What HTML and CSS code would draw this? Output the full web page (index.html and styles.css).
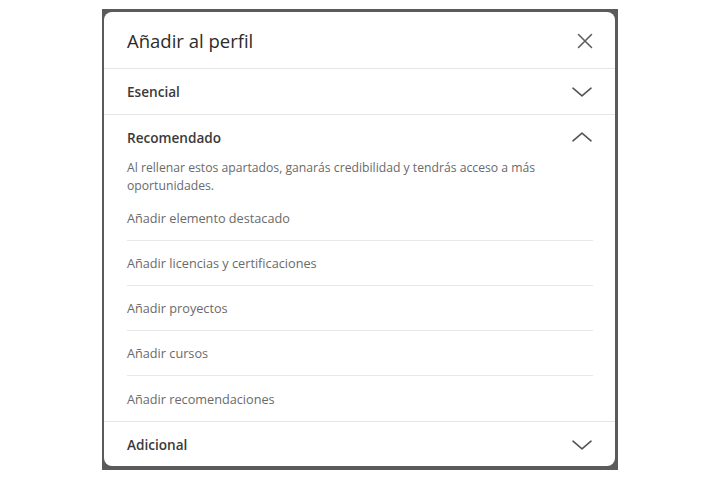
FILE: index.html
```
<!DOCTYPE html>
<html lang="es">
<head>
<meta charset="utf-8">
<title>Añadir al perfil</title>
<link rel="stylesheet" href="styles.css">
</head>
<body>
<div class="backdrop">
  <div class="modal">
    <div class="modal-head">
      <h2 class="title">Añadir al perfil</h2>
      <svg class="close" width="16" height="16" viewBox="0 0 16 16"><path d="M1.5 1.5 L14.5 14.5 M14.5 1.5 L1.5 14.5" fill="none" stroke="#5e5e5e" stroke-width="1.6" stroke-linecap="round"/></svg>
    </div>
    <div class="sec-head bordered">
      <span class="sec-title">Esencial</span>
      <svg class="chev" width="20" height="10" viewBox="0 0 20 10"><polyline points="1,1.2 10,8.8 19,1.2" fill="none" stroke="#555" stroke-width="1.6" stroke-linecap="round" stroke-linejoin="round"/></svg>
    </div>
    <div class="sec-head">
      <span class="sec-title">Recomendado</span>
      <svg class="chev up" width="20" height="10" viewBox="0 0 20 10"><polyline points="1,8.8 10,1.2 19,8.8" fill="none" stroke="#555" stroke-width="1.6" stroke-linecap="round" stroke-linejoin="round"/></svg>
    </div>
    <p class="desc">Al rellenar estos apartados, ganarás credibilidad y tendrás acceso a más oportunidades.</p>
    <ul class="items">
      <li>Añadir elemento destacado</li>
      <li>Añadir licencias y certificaciones</li>
      <li>Añadir proyectos</li>
      <li>Añadir cursos</li>
      <li>Añadir recomendaciones</li>
    </ul>
    <div class="sec-head last">
      <span class="sec-title">Adicional</span>
      <svg class="chev" width="20" height="10" viewBox="0 0 20 10"><polyline points="1,1.2 10,8.8 19,1.2" fill="none" stroke="#555" stroke-width="1.6" stroke-linecap="round" stroke-linejoin="round"/></svg>
    </div>
  </div>
</div>
</body>
</html>
```
FILE: styles.css
```
html, body {
  margin: 0;
  padding: 0;
  background: #ffffff;
}
body {
  font-family: "Open Sans", "Noto Sans", sans-serif;
  color: #333;
}
.backdrop {
  box-sizing: border-box;
  margin: 9px 0 0 102px;
  width: 516px;
  height: 461px;
  padding: 3px 3px 4px 2px;
  background: #5b5b5b;
}
.modal {
  box-sizing: border-box;
  height: 454px;
  background: #fff;
  border-radius: 8px;
  display: flex;
  flex-direction: column;
}
.modal-head {
  box-sizing: border-box;
  height: 57px;
  padding: 0 22px 0 23px;
  display: flex;
  align-items: center;
  justify-content: space-between;
  border-bottom: 1px solid #e6e6e6;
}
.title {
  margin: 0;
  font-size: 18.5px;
  font-weight: 400;
  color: #2b2b2b;
}
.close {
  display: block;
  margin-top: 2px;
}
.sec-head {
  box-sizing: border-box;
  height: 45px;
  padding: 0 23px;
  display: flex;
  align-items: center;
  justify-content: space-between;
  flex: none;
}
.sec-head.bordered {
  height: 46px;
  border-bottom: 1px solid #e6e6e6;
}
.sec-head.last {
  height: 45px;
  border-top: 1px solid #e6e6e6;
  padding-top: 1px;
}
.sec-title {
  font-size: 13.6px;
  font-weight: 600;
  color: #3a3a3a;
}
.chev {
  display: block;
}
.chev.up {
  margin-top: -2px;
}
.desc {
  margin: -1px 0 0;
  padding: 0 23px;
  font-size: 12.2px;
  line-height: 18px;
  color: #6a6a6a;
}
.items {
  list-style: none;
  margin: 1px 22px 0 23px;
  padding: 0;
}
.items li {
  box-sizing: border-box;
  height: 45px;
  display: flex;
  align-items: center;
  font-size: 12.7px;
  color: #6a6a6a;
  border-bottom: 1px solid #e8e8e8;
}
.items li:last-child {
  border-bottom: none;
}
```
